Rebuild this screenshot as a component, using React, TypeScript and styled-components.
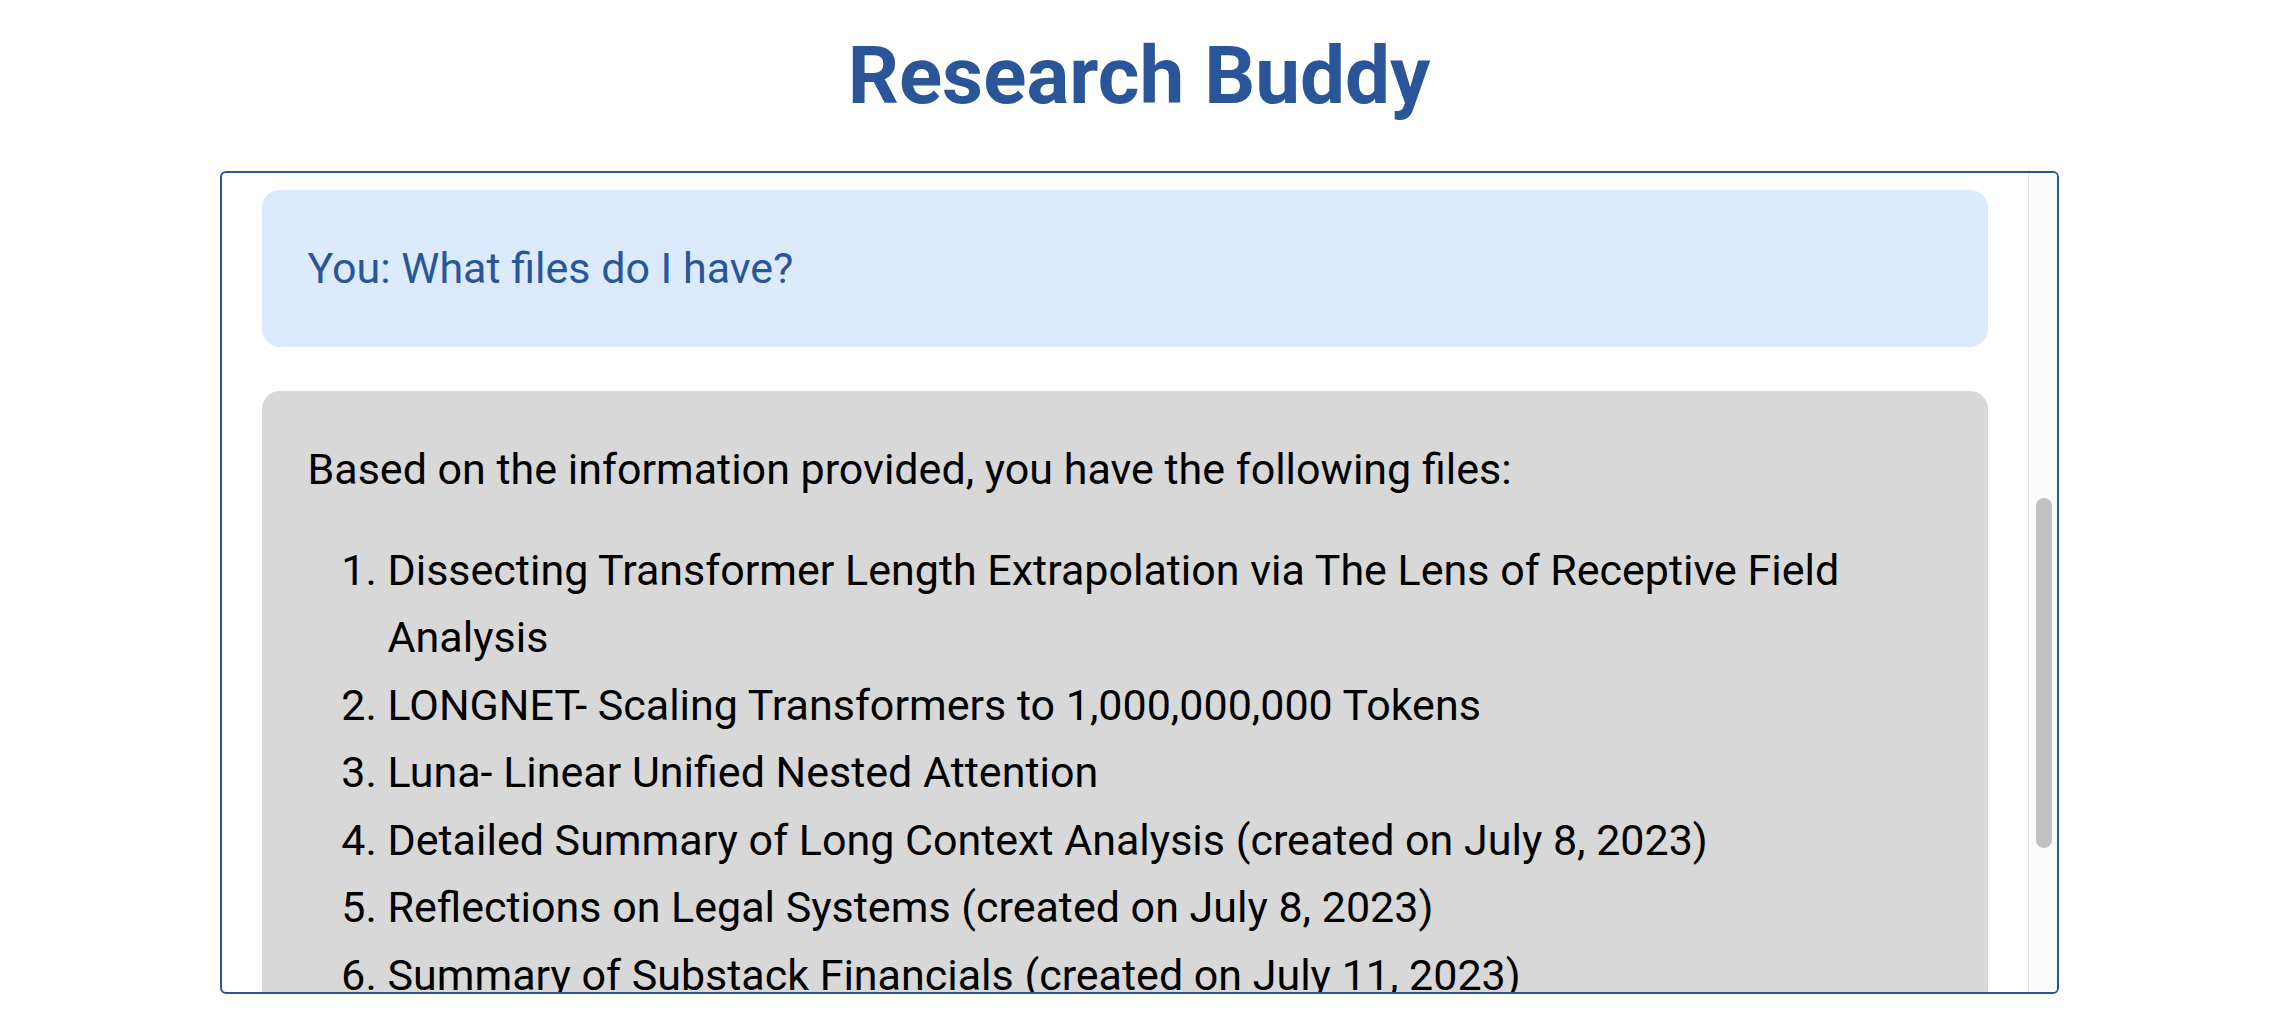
import { useLayoutEffect, useRef, useState } from 'react';
import styled, { createGlobalStyle } from 'styled-components';

const GlobalStyle = createGlobalStyle`
    html, body {
        margin: 0;
        padding: 0;
        background-color: #ffffff;
        font-family: Roboto, "Noto Sans", "Liberation Sans", sans-serif;
    }
`;

export const Page = styled.div`
    display: flex;
    flex-direction: column;
    align-items: center;
    width: 100%;
`;

export const Title = styled.h1`
    margin: 29px 0 48px;
    font-size: 80px;
    font-weight: 700;
    line-height: 94px;
    color: #2a5699;
    text-align: center;
`;

export const ChatBox = styled.div`
    display: flex;
    box-sizing: border-box;
    width: 1839px;
    height: 823px;
    border: 2px solid #2a5699;
    border-radius: 6px;
    overflow: hidden;
    background-color: #ffffff;
`;

export const Viewport = styled.div`
    position: relative;
    flex: 1;
    min-width: 0;
    overflow-y: scroll;
    scrollbar-width: none;

    &::-webkit-scrollbar {
        display: none;
    }
`;

export const ScrollTrack = styled.div`
    flex: 0 0 28px;
    display: flex;
    flex-direction: column;
    background-color: #fafafa;
    border-left: 1px solid #e8e8e8;
`;

export const ScrollThumb = styled.div`
    width: 16px;
    margin-left: 7px;
    border-radius: 8px;
    background-color: #c1c1c1;
`;

export const MessageList = styled.div`
    display: flex;
    flex-direction: column;
    gap: 44px;
    padding: 40px 40px;
`;

export const Bubble = styled.div<{ $user?: boolean }>`
    padding: 45px 46px;
    border-radius: 18px;
    background-color: ${({ $user }) => ($user ? '#dbeafc' : '#d8d8d8')};
    color: ${({ $user }) => ($user ? '#2a5699' : '#000000')};
    font-size: 43px;
    line-height: 67.5px;
`;

export const Paragraph = styled.p`
    margin: 0;

    & + ol,
    & + p {
        margin-top: 33px;
    }
`;

export const FileList = styled.ol`
    margin: 0;
    padding-left: 80px;

    & + p {
        margin-top: 33px;
    }
`;

export const FileItem = styled.li`
    margin: 0;
`;

const files = [
    'Dissecting Transformer Length Extrapolation via The Lens of Receptive Field Analysis',
    'LONGNET- Scaling Transformers to 1,000,000,000 Tokens',
    'Luna- Linear Unified Nested Attention',
    'Detailed Summary of Long Context Analysis (created on July 8, 2023)',
    'Reflections on Legal Systems (created on July 8, 2023)',
    'Summary of Substack Financials (created on July 11, 2023)',
    'Notes on Retrieval Augmented Generation (created on July 12, 2023)',
    'Reading List for Efficient Attention (created on July 12, 2023)',
];

export default function App() {
    const viewRef = useRef<HTMLDivElement>(null);
    const targetRef = useRef<HTMLDivElement>(null);
    const [thumb, setThumb] = useState({ top: 0, height: 0 });

    useLayoutEffect(() => {
        const view = viewRef.current;
        if (!view || !targetRef.current) return;
        view.scrollTop = targetRef.current.offsetTop - 17;
        const track = view.clientHeight;
        const ratio = track / view.scrollHeight;
        setThumb({ top: view.scrollTop * ratio, height: track * ratio });
    }, []);

    return (
        <>
            <GlobalStyle />
            <Page>
                <Title>Research Buddy</Title>
                <ChatBox>
                    <Viewport ref={viewRef}>
                        <MessageList>
                            <Bubble>
                                <Paragraph>Hello! I'm Research Buddy. Ask me anything about your uploaded files.</Paragraph>
                            </Bubble>
                            <Bubble $user>You: Summarize the LONGNET paper</Bubble>
                            <Bubble>
                                <Paragraph>
                                    LONGNET is a Transformer variant that scales sequence length to more than 1 billion
                                    tokens without losing performance on shorter sequences. Its dilated attention expands
                                    the attentive field exponentially as the distance grows.
                                </Paragraph>
                            </Bubble>
                            <Bubble $user ref={targetRef}>
                                You: What files do I have?
                            </Bubble>
                            <Bubble>
                                <Paragraph>Based on the information provided, you have the following files:</Paragraph>
                                <FileList>
                                    {files.map((f) => (
                                        <FileItem key={f}>{f}</FileItem>
                                    ))}
                                </FileList>
                                <Paragraph>Let me know if you would like a summary of any of these files.</Paragraph>
                            </Bubble>
                        </MessageList>
                    </Viewport>
                    <ScrollTrack>
                        <ScrollThumb style={{ marginTop: thumb.top, height: thumb.height }} />
                    </ScrollTrack>
                </ChatBox>
            </Page>
        </>
    );
}
